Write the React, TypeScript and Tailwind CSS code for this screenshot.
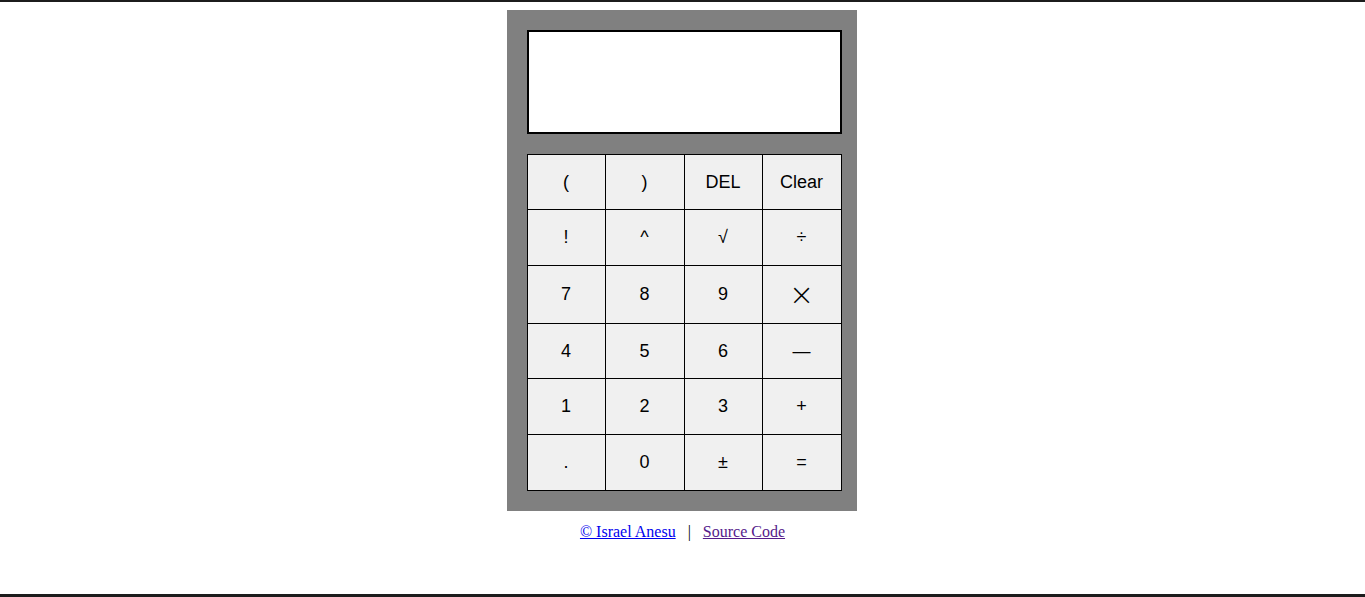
import React from "react"

const rows: { keys: string[]; h: string }[] = [
  { keys: ["(", ")", "DEL", "Clear"], h: "h-[54px]" },
  { keys: ["!", "^", "√", "÷"], h: "h-[55px]" },
  { keys: ["7", "8", "9", "×"], h: "h-[57px]" },
  { keys: ["4", "5", "6", "—"], h: "h-[54px]" },
  { keys: ["1", "2", "3", "+"], h: "h-[55px]" },
  { keys: [".", "0", "±", "="], h: "h-[55px]" },
]

export default function App() {
  return (
    <div className="h-[597px] w-full border-t-2 border-b-[3px] border-[#1c1c1c] bg-white overflow-hidden">
      <div className="flex flex-col items-center pt-2">
        <div className="w-[350px] mr-[2px] bg-[#808080] pl-5 pr-[15px] py-5">
          {/* display */}
          <div className="w-[315px] h-[104px] bg-white border-2 border-black"></div>

          {/* keypad */}
          <div className="mt-5 w-[315px] grid grid-cols-[77px_78px_77px_78px] gap-px bg-black border border-black">
            {rows.map((row) =>
              row.keys.map((k) => (
                <button
                  key={k}
                  className={`${row.h} bg-[#f0f0f0] flex items-center justify-center text-black ${
                    k === "×"
                      ? "text-[30px] font-extralight font-['DejaVu_Sans',sans-serif]"
                      : "text-[18px] font-['Liberation_Sans',Arial,sans-serif]"
                  }`}
                >
                  {k}
                </button>
              ))
            )}
          </div>
        </div>

        <div className="mt-[11px] font-['Liberation_Serif','Times_New_Roman',serif] text-[16px] leading-[20px]">
          <a href="#" className="text-[#0000ee] underline">© Israel Anesu</a>
          <span className="mx-3 text-black">|</span>
          <a href="#" className="text-[#551a8b] underline">Source Code</a>
        </div>
      </div>
    </div>
  )
}
